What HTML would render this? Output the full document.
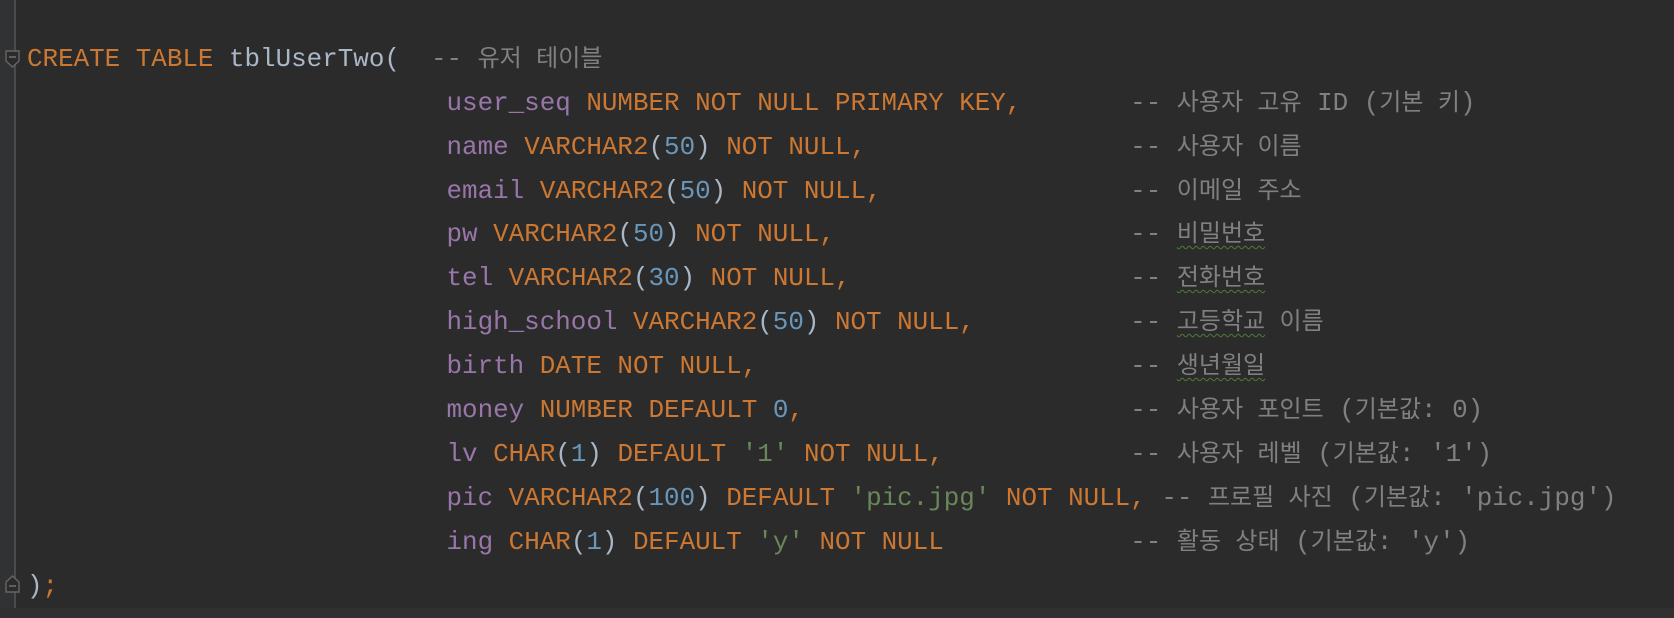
<!DOCTYPE html><html><head><meta charset="utf-8"><style>
body{margin:0;width:1674px;height:618px;background:#2b2b2b;overflow:hidden;position:relative}
.g{position:absolute;left:0;top:0;width:14px;height:618px;background:#303234}
.gl{position:absolute;left:14px;top:0;width:2px;height:608px;background:#4b4b4b}
.bot{position:absolute;left:0;top:608px;width:1674px;height:10px;background:#303030}
.l{position:absolute;left:27px;margin:0;white-space:pre;font:25.9px/42px "Liberation Mono","Noto Sans CJK KR",monospace;color:#a9b7c6}
.k{color:#cc7832}.i{color:#9876aa}.n{color:#6897bb}.s{color:#6a8759}.c{color:#808080}
.h{font-size:24px}
.w{text-decoration:underline wavy #4e7a3a;text-underline-offset:4px;text-decoration-thickness:1px}
.f{position:absolute;left:5px;width:15px;height:18px}
</style></head><body>
<div class="g"></div><div class="gl"></div><div class="bot"></div>
<svg class="f" style="top:50px" viewBox="0 0 15 18"><path d="M1 1H14V11L7.5 17L1 11Z" fill="#2b2b2b" stroke="#666" stroke-width="1.4"/><path d="M4 7H11" stroke="#777" stroke-width="1.4"/></svg>
<svg class="f" style="top:575px" viewBox="0 0 15 18"><path d="M1 17H14V7L7.5 1L1 7Z" fill="#2b2b2b" stroke="#666" stroke-width="1.4"/><path d="M4 11H11" stroke="#777" stroke-width="1.4"/></svg>
<div class="l" style="top:38px"><span class="k">CREATE TABLE </span>tblUserTwo(  <span class="c">-- <span class="h">유저 테이블</span></span></div>
<div class="l" style="top:82px">                           <span class="i">user_seq</span> <span class="k">NUMBER NOT NULL PRIMARY KEY,</span>       <span class="c">-- <span class="h">사용자 고유</span> ID (<span class="h">기본 키</span>)</span></div>
<div class="l" style="top:126px">                           <span class="i">name</span> <span class="k">VARCHAR2</span>(<span class="n">50</span>) <span class="k">NOT NULL,</span>                 <span class="c">-- <span class="h">사용자 이름</span></span></div>
<div class="l" style="top:170px">                           <span class="i">email</span> <span class="k">VARCHAR2</span>(<span class="n">50</span>) <span class="k">NOT NULL,</span>                <span class="c">-- <span class="h">이메일 주소</span></span></div>
<div class="l" style="top:213px">                           <span class="i">pw</span> <span class="k">VARCHAR2</span>(<span class="n">50</span>) <span class="k">NOT NULL,</span>                   <span class="c">-- <span class="h w">비밀번호</span></span></div>
<div class="l" style="top:257px">                           <span class="i">tel</span> <span class="k">VARCHAR2</span>(<span class="n">30</span>) <span class="k">NOT NULL,</span>                  <span class="c">-- <span class="h w">전화번호</span></span></div>
<div class="l" style="top:301px">                           <span class="i">high_school</span> <span class="k">VARCHAR2</span>(<span class="n">50</span>) <span class="k">NOT NULL,</span>          <span class="c">-- <span class="h"><span class="w">고등학교</span> 이름</span></span></div>
<div class="l" style="top:345px">                           <span class="i">birth</span> <span class="k">DATE NOT NULL,</span>                        <span class="c">-- <span class="h w">생년월일</span></span></div>
<div class="l" style="top:389px">                           <span class="i">money</span> <span class="k">NUMBER DEFAULT</span> <span class="n">0</span><span class="k">,</span>                     <span class="c">-- <span class="h">사용자 포인트</span> (<span class="h">기본값</span>: 0)</span></div>
<div class="l" style="top:433px">                           <span class="i">lv</span> <span class="k">CHAR</span>(<span class="n">1</span>) <span class="k">DEFAULT</span> <span class="s">'1'</span> <span class="k">NOT NULL,</span>            <span class="c">-- <span class="h">사용자 레벨</span> (<span class="h">기본값</span>: '1')</span></div>
<div class="l" style="top:477px">                           <span class="i">pic</span> <span class="k">VARCHAR2</span>(<span class="n">100</span>) <span class="k">DEFAULT</span> <span class="s">'pic.jpg'</span> <span class="k">NOT NULL,</span> <span class="c">-- <span class="h">프로필 사진</span> (<span class="h">기본값</span>: 'pic.jpg')</span></div>
<div class="l" style="top:521px">                           <span class="i">ing</span> <span class="k">CHAR</span>(<span class="n">1</span>) <span class="k">DEFAULT</span> <span class="s">'y'</span> <span class="k">NOT NULL</span>            <span class="c">-- <span class="h">활동 상태</span> (<span class="h">기본값</span>: 'y')</span></div>
<div class="l" style="top:565px">)<span class="k">;</span></div>
</body></html>
